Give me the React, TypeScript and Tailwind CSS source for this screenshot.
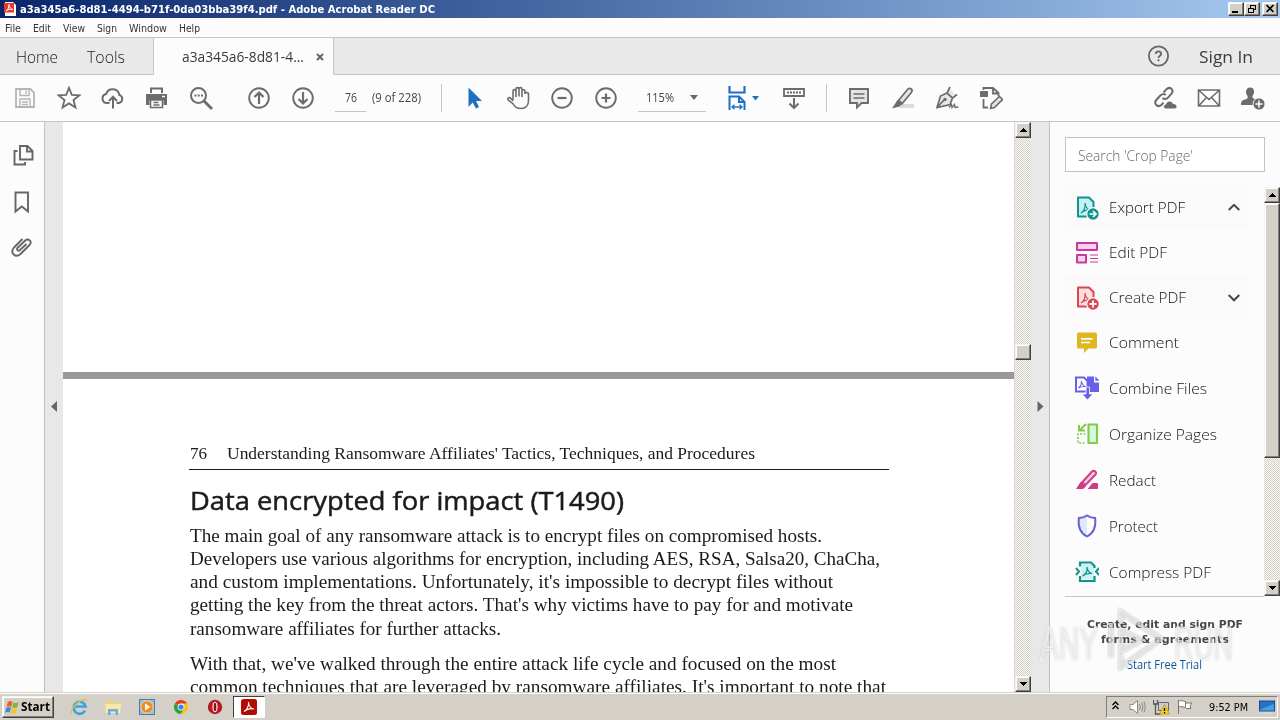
import { useLayoutEffect, useRef, useState } from 'react';
import type { ReactNode } from 'react';

/* Text stretched or squeezed horizontally to a known advance width. */
function Fit({ w, children, className = '' }: { w: number; children: ReactNode; className?: string }) {
  const ref = useRef<HTMLSpanElement>(null);
  const [scale, setScale] = useState(1);
  useLayoutEffect(() => {
    if (ref.current && ref.current.offsetWidth) setScale(w / ref.current.getBoundingClientRect().width);
  }, [w]);
  return (
    <span className={`block shrink-0 whitespace-nowrap ${className}`} style={{ width: w }}>
      <span ref={ref} className="inline-block origin-left" style={{ transform: `scaleX(${scale})` }}>
        {children}
      </span>
    </span>
  );
}

function Icon({ children, size = 24, className = '' }: { children: ReactNode; size?: number; className?: string }) {
  return (
    <svg width={size} height={size} viewBox="0 0 24 24" fill="none" stroke="currentColor" strokeWidth="2" className={`block shrink-0 ${className}`}>
      {children}
    </svg>
  );
}

function Cell({ children }: { children: ReactNode }) {
  return <div className="flex h-full w-11 shrink-0 items-center justify-center">{children}</div>;
}

const raised = 'border border-t-[#f4f3f0] border-l-[#f4f3f0] border-r-[#404040] border-b-[#404040] bg-[#d4d0c8] shadow-[inset_-1px_-1px_0_#808080,inset_1px_1px_0_#ffffff]';
const dither = 'bg-[repeating-conic-gradient(#d4d0c8_0%_25%,#fbfaf6_0%_50%)] bg-[length:2px_2px]';

function TitleButton({ kind }: { kind: 'min' | 'restore' | 'close' }) {
  return (
    <div className={`flex h-[14px] w-4 items-center justify-center ${raised}`}>
      <svg width="12" height="10" viewBox="0 0 12 10" fill="none" stroke="#000" className="shrink-0" shapeRendering="crispEdges">
        {kind === 'min' && <path d="M2 8h6" strokeWidth="2" />}
        {kind === 'restore' && <path d="M4.500 4V1.500h5v4H8M4 1.500h6M2.500 4.500h5v4h-5zM2 4.500h6" />}
        {kind === 'close' && <path d="M2.500 1l7 7M9.500 1l-7 7" strokeWidth="1.600" shapeRendering="auto" />}
      </svg>
    </div>
  );
}

function ScrollButton({ down = false }: { down?: boolean }) {
  return (
    <div className={`flex h-4 w-4 shrink-0 items-center justify-center ${raised}`}>
      <svg width="7" height="4" viewBox="0 0 7 4" fill="#000" shapeRendering="crispEdges">
        <path d={down ? 'M0 0h7L3.500 4z' : 'M0 4h7L3.500 0z'} />
      </svg>
    </div>
  );
}

function TitleBar() {
  return (
    <div className="flex h-[18px] shrink-0 items-center bg-linear-to-r from-[#0a246a] to-[#a6caf0] pr-0.5 pl-1">
      <svg width="12" height="14" viewBox="0 0 12 14" className="shrink-0">
        <path d="M1 0h8l3 3v11H1z" fill="#fff" />
        <path d="M0 1h10v9.500H0z" fill="#e8372f" />
        <path d="M2 9c2-1 3-4 3-6.500C5 5 7 7.500 9 7.500 6 6.500 4 7.500 2 9z" fill="none" stroke="#fff" />
      </svg>
      <Fit w={415} className="ml-1 pt-px text-[11px] leading-[18px] font-bold text-white">
        a3a345a6-8d81-4494-b71f-0da03bba39f4.pdf - Adobe Acrobat Reader DC
      </Fit>
      <div className="ml-auto flex">
        <TitleButton kind="min" />
        <TitleButton kind="restore" />
        <div className="w-0.5" />
        <TitleButton kind="close" />
      </div>
    </div>
  );
}

function MenuBar() {
  return (
    <div className="flex h-[19px] shrink-0 items-center gap-3 bg-[#fdfcfc] pt-px pl-[5px] font-['DejaVu_Sans_Condensed','DejaVu_Sans',sans-serif] text-[11px] leading-[19px] text-[#333]">
      <Fit w={16}>File</Fit>
      <Fit w={18}>Edit</Fit>
      <Fit w={22}>View</Fit>
      <Fit w={20}>Sign</Fit>
      <Fit w={38}>Window</Fit>
      <Fit w={21}>Help</Fit>
    </div>
  );
}

function TabBar() {
  return (
    <div className="flex h-[38px] shrink-0 border-t border-[#c6c6c6] bg-[#e9e9e9] text-[16px] font-light text-[#1c1c1c]">
      <div className="flex w-[153px] items-center border-b border-[#c6c6c6] pt-0.5 pl-4">
        <Fit w={42}>Home</Fit>
        <Fit w={38} className="ml-[29px]">Tools</Fit>
      </div>
      <div className="flex w-[181px] items-center border-x border-[#c6c6c6] bg-[#fcfcfc] pl-7 text-[15px] font-normal text-[#3a3a3a]">
        <Fit w={122}>a3a345a6-8d81-4...</Fit>
        <svg width="8" height="8" viewBox="0 0 8 8" className="ml-3" stroke="#666" strokeWidth="2">
          <path d="M1 1l6 6M7 1L1 7" />
        </svg>
      </div>
      <div className="flex flex-1 items-center border-b border-[#c6c6c6] pl-[812px] text-[#666]">
        <Icon>
          <circle cx="12.500" cy="12" r="9.600" strokeWidth="1.800" />
          <path d="M9.800 9.900c0-3.400 5.300-3.100 5.300 0 0 2-2.600 2-2.600 4M12.500 15.300v2" strokeWidth="1.800" />
        </Icon>
        <Fit w={54} className="ml-[29px] pt-px font-normal text-[#3c3c3c]">Sign In</Fit>
      </div>
    </div>
  );
}

function Toolbar() {
  return (
    <div className="flex h-[47px] shrink-0 items-center border-b border-[#c6c6c6] bg-[#fcfcfc] pl-[3px] text-[#6c6c6c]">
      <Cell>
        <Icon className="text-[#b4b4b4]">
          <path d="M3 3h14.500L21 6.500V21H3z" strokeWidth="1.800" />
          <path d="M7 3v6.500h9V3M7 21v-8h10v8M13 4.500V8M9 16h6M9 18.500h6" strokeWidth="1.400" />
        </Icon>
      </Cell>
      <Cell>
        <Icon><path d="M12 1.800l2.800 7.100 7.600.4-5.900 4.800 2 7.400-6.500-4.100-6.500 4.100 2-7.400L1.600 9.300l7.600-.4z" strokeWidth="1.800" /></Icon>
      </Cell>
      <Cell>
        <Icon>
          <path d="M8.500 17H6a4.600 4.600 0 0 1-.8-9.100 6.800 6.800 0 0 1 13.100 1A4.200 4.200 0 0 1 18 17h-2.500" />
          <path d="M12 22.500V11M8 15l4-4.200 4 4.200" />
        </Icon>
      </Cell>
      <Cell>
        <Icon>
          <path d="M5 1.500h13V7H5zM1 8h21v11h-3.500v-5h-14v5H1z" fill="currentColor" stroke="none" />
          <path d="M7 3.500h9V7H7z" fill="#fcfcfc" stroke="none" />
          <path d="M5.500 14h12v7.500h-12zM8.500 16.500h5M8.500 19h6" strokeWidth="1.600" />
          <path d="M17 10.500h3" stroke="#fcfcfc" strokeWidth="1.400" />
        </Icon>
      </Cell>
      <Cell>
        <Icon>
          <circle cx="9.500" cy="9.500" r="7.500" />
          <path d="M15 15l8 8" strokeWidth="2.800" />
          <path d="M5.500 9.500h2M8.700 9.500h2M12 9.500h2" strokeWidth="1.800" />
        </Icon>
      </Cell>
      <div className="w-3.5 shrink-0" />
      <Cell>
        <Icon><circle cx="12" cy="12" r="9.800" strokeWidth="1.900" /><path d="M12 18V7M7.500 11L12 6.500l4.500 4.500" strokeWidth="2.200" /></Icon>
      </Cell>
      <Cell>
        <Icon><circle cx="12" cy="12" r="9.800" strokeWidth="1.900" /><path d="M12 6v11M7.500 13l4.500 4.500 4.500-4.500" strokeWidth="2.200" /></Icon>
      </Cell>
      <div className="ml-[10px] flex h-[27px] w-[31px] shrink-0 items-center justify-center border-b border-[#c4c4c4] text-[12px] text-[#444]">
        <Fit w={12}>76</Fit>
      </div>
      <Fit w={49} className="ml-[6px] text-[12px] text-[#444]">(9 of 228)</Fit>
      <div className="ml-5 h-7 w-px shrink-0 bg-[#c6c6c6]" />
      <div className="w-[10px] shrink-0" />
      <Cell>
        <Icon className="text-[#1f70c1]"><path d="M6.500 1.500v19.500l4.200-4.500 3.300 6 3-1.500-3-6H20z" fill="currentColor" stroke="none" /></Icon>
      </Cell>
      <Cell>
        <Icon>
          <path d="M7 14V5.300c0-2.200 3-2.200 3 0V11M10 10.500V3.300c0-2.200 3-2.200 3 0V10.500M13 10.500V3.300c0-2.200 3-2.200 3 0V11M16 10.500V5.300c0-2 3-2 3 0" strokeWidth="1.600" />
          <path d="M19 5v3c0-2 3.500-2 3.500 0v6.500c0 5-3 8-7.500 8-4 0-6.300-1.500-7.800-4.500L2 13.800c-.8-2 1.800-3 3-1.300L7 15" strokeWidth="1.600" />
        </Icon>
      </Cell>
      <Cell>
        <Icon><circle cx="12" cy="12" r="9.800" strokeWidth="1.900" /><path d="M7.500 12h9" strokeWidth="2.200" /></Icon>
      </Cell>
      <Cell>
        <Icon><circle cx="12" cy="12" r="9.800" strokeWidth="1.900" /><path d="M7.500 12h9M12 7.500v9" strokeWidth="2.200" /></Icon>
      </Cell>
      <div className="ml-[10px] flex h-[27px] w-[68px] shrink-0 items-center border-b border-[#c4c4c4] pl-2 text-[12px] text-[#444]">
        <Fit w={28}>115%</Fit>
        <svg width="8" height="5" viewBox="0 0 8 5" className="ml-4" fill="#666"><path d="M0 0h8L4 5z" /></svg>
      </div>
      <div className="ml-[20px] flex shrink-0 items-center text-[#1f70c1]">
        <Icon>
          <path d="M3.500 0v6.500h15V0" strokeWidth="2.200" />
          <path d="M3.500 24V10.500H13l5.500 5.500v8M13 10.500V16h5.500" strokeWidth="2" />
          <path d="M6.500 21h9M8.500 18.800L6 21l2.500 2.200M13.500 18.800L16 21l-2.500 2.200" strokeWidth="1.300" />
        </Icon>
        <svg width="7" height="5" viewBox="0 0 7 5" className="ml-[2px]" fill="currentColor"><path d="M0 0h7L3.500 4.500z" /></svg>
      </div>
      <div className="w-[13px] shrink-0" />
      <Cell>
        <Icon>
          <path d="M2 3h20v7H2z" strokeWidth="1.800" />
          <path d="M5 6.500h14" strokeWidth="2" strokeDasharray="2 1" />
          <path d="M12 12v9.500M7.500 17.500L12 22l4.500-4.500" />
        </Icon>
      </Cell>
      <div className="ml-[10px] h-7 w-px shrink-0 bg-[#c6c6c6]" />
      <div className="w-[10px] shrink-0" />
      <Cell>
        <Icon><path d="M3 3h18v14h-6.500L10 21.500V17H3z" fill="#e4e4e4" strokeWidth="1.900" /><path d="M6.500 8h11M6.500 12h11" strokeWidth="1.500" /></Icon>
      </Cell>
      <Cell>
        <Icon>
          <path d="M11 18h12v4H8z" fill="#dcdcdc" stroke="none" />
          <path d="M7.500 14.500l9-11c1.200-1.500 2.500-1.500 3.700-.5s1.200 2.300 0 3.800l-9 10.700z" fill="#e4e4e4" strokeWidth="1.700" />
          <path d="M6.500 14l5 4-3 2.500L1 22.500z" fill="currentColor" stroke="none" />
        </Icon>
      </Cell>
      <Cell>
        <Icon>
          <path d="M14 2l6 6-3 2-1 7-14 4.500L6.500 9l6-2.500z" fill="#e6e6e6" stroke="none" />
          <path d="M2 21.500L5.500 10 12 7l5.500 5-2.500 6.500zM2 21.500L9 14M12 7l3-6M17.500 12L22 8.500" strokeWidth="1.700" />
          <circle cx="10" cy="13.500" r="1.700" fill="currentColor" stroke="none" />
          <path d="M14 21.500l2.500-3 .5 3 2.500-3 .5 3 3.500-.5" strokeWidth="1.300" />
        </Icon>
      </Cell>
      <Cell>
        <Icon>
          <path d="M1 5h8v6H1z" fill="currentColor" stroke="none" />
          <path d="M4.500 4V2H14l5.500 5v3.500M14 2v5.500h5M4.500 13v8.500H9" strokeWidth="1.800" />
          <path d="M11.500 22.500l1-4.500 8-7.500 3 3-8 8z" fill="#e4e4e4" strokeWidth="1.600" />
        </Icon>
      </Cell>
      <div className="ml-auto flex h-full pr-[5px]">
        <Cell>
          <Icon>
            <path d="M10.500 6.500l3-3.300c3.200-3.200 8 .8 5 4.500l-3.500 4c-1.600 1.800-4 1.800-5.500.3M12.800 9c-1.500-1.400-4-1-5.500.5l-4 4.500c-3 3.500 1.500 8 5 5l2.200-2.200" />
            <path d="M12.500 22.500c-2-.3-2-3.600.5-4 .8-3.500 5.500-4 7-.5 3.500-.5 5 4 2 4.500z" fill="currentColor" stroke="none" />
          </Icon>
        </Cell>
        <Cell>
          <Icon><path d="M1.500 4h21v16h-21zM2 4.500l10 9 10-9M2 19.500l7.500-8M22 19.500l-7.500-8" strokeWidth="1.600" /></Icon>
        </Cell>
        <Cell>
          <Icon>
            <path d="M9 1.500c3 0 4.300 2 4 4.800-.2 1.700-.8 2.700-1.500 3.700-.5 2 .5 2.500 3 3.300-2 1.200-3 3-2.500 5.700H0c0-4 1.500-5 5-5.700 1.500-.5 2-1.300 1.500-3.300C4 7 4.500 1.500 9 1.500z" fill="currentColor" stroke="none" />
            <circle cx="18" cy="18" r="6" fill="currentColor" stroke="#fcfcfc" strokeWidth=".8" />
            <path d="M18 14.500v7M14.500 18h7" stroke="#fcfcfc" strokeWidth="1.600" />
          </Icon>
        </Cell>
      </div>
    </div>
  );
}

function LeftRail() {
  return (
    <div className="flex w-[45px] shrink-0 flex-col border-r border-[#c0c0c0] bg-[#fcfcfc] pt-[21px] pl-[10px] text-[#666]">
      <Icon className="ml-[1px]">
        <path d="M9 3h7.500l5 5v8.500H9zM16 3.500v5h5M6.500 8H3.500v13.500H14V19" strokeWidth="1.900" />
      </Icon>
      <Icon className="mt-[23px]">
        <path d="M5.500 2.500h12.500V21.500l-6.200-5-6.300 5z" strokeWidth="1.900" />
      </Icon>
      <Icon className="mt-[22px]">
        <path d="M17 8.500l-6.500 6c-2 1.700-4-.5-2.300-2.300l7.300-7c3.500-3 7.500.8 4.500 4.300l-9 9c-5 4.500-11-1-6.500-6.500L13 3.500" strokeWidth="1.900" transform="translate(-.5 -.5)" />
      </Icon>
    </div>
  );
}

function Gutter({ right = false }: { right?: boolean }) {
  return (
    <div className="flex w-[18px] shrink-0 items-center justify-center bg-[#e8e8e8]">
      <svg width="7" height="12" viewBox="0 0 7 12" fill="#666">
        <path d={right ? 'M.5 0v11L6.500 5.500z' : 'M6 0v11L0 5.500z'} />
      </svg>
    </div>
  );
}

const paragraphs: [string, number][][] = [
  [
    ['The main goal of any ransomware attack is to encrypt files on compromised hosts.', 632],
    ['Developers use various algorithms for encryption, including AES, RSA, Salsa20, ChaCha,', 690],
    ["and custom implementations. Unfortunately, it's impossible to decrypt files without", 643],
    ["getting the key from the threat actors. That's why victims have to pay for and motivate", 663],
    ['ransomware affiliates for further attacks.', 311],
  ],
  [
    ["With that, we've walked through the entire attack life cycle and focused on the most", 646],
    ["common techniques that are leveraged by ransomware affiliates. It's important to note that", 696],
  ],
];

function Document() {
  return (
    <div className="flex min-w-0 flex-1 flex-col overflow-hidden bg-white text-[#1c1a1b]">
      <div className="h-[250px] shrink-0" />
      <div className="h-[7px] shrink-0 bg-[#999]" />
      <div className="flex shrink-0 flex-col pt-[62px] pl-[127px] font-['Liberation_Serif',serif]">
        <div className="flex h-6 text-[17.500px] leading-6">
          <Fit w={17}>76</Fit>
          <Fit w={528} className="ml-5">Understanding Ransomware Affiliates' Tactics, Techniques, and Procedures</Fit>
        </div>
        <div className="mt-[4px] -ml-px h-px w-[700px] bg-[#1c1a1b]" />
        <h1 className="mt-3 font-['Open_Sans','Noto_Sans',sans-serif] text-[26px] leading-9 font-normal [-webkit-text-stroke:0.5px_#1c1a1b]">
          <Fit w={434}>Data encrypted for impact (T1490)</Fit>
        </h1>
        {paragraphs.map((lines, i) => (
          <div key={i} className="mt-[6px] mb-[6px] text-[19px] leading-[23.150px]">
            {lines.map(([text, w]) => (
              <Fit key={text} w={w}>{text}</Fit>
            ))}
          </div>
        ))}
      </div>
    </div>
  );
}

function PdfPage({ color, fill }: { color: string; fill: string }) {
  return (
    <>
      <path d="M3 1.500h11l4.500 4.500v14.500H3z" fill={fill} stroke={color} strokeLinejoin="round" />
      <path d="M6 17c3-2 4.500-6 4-10 .5 5 3 6.500 6 7-5-.5-7.500.5-10 3z" stroke={color} strokeWidth="1.200" />
    </>
  );
}

const teal = '#12938b';
const tools: { name: string; w: number; chevron?: 'up' | 'down'; row: string; icon: ReactNode }[] = [
  {
    name: 'Export PDF', w: 76, chevron: 'up', row: 'h-[45px] bg-[#fafafa]',
    icon: (
      <>
        <PdfPage color={teal} fill="#c4f0f4" />
        <circle cx="18" cy="18" r="6.300" fill={teal} stroke="#fafafa" strokeWidth="1.200" />
        <path d="M14.500 18h6M18 15l3 3-3 3" stroke="#fff" strokeWidth="1.700" />
      </>
    ),
  },
  {
    name: 'Edit PDF', w: 58, row: 'h-[45px]',
    icon: (
      <g stroke="#cb3a9b">
        <path d="M2 2h20v7H2zM2 14h9v7.500H2z" fill="#fbd0ef" strokeWidth="2" strokeLinejoin="round" />
        <path d="M15 14H23M15 17.500H23M15 21H23" strokeWidth="1.200" />
      </g>
    ),
  },
  {
    name: 'Create PDF', w: 77, chevron: 'down', row: 'h-[45px] bg-[#fafafa]',
    icon: (
      <>
        <PdfPage color="#dc4653" fill="#fcdedf" />
        <circle cx="18" cy="18" r="6.300" fill="#dc4653" stroke="#fafafa" strokeWidth="1.200" />
        <path d="M14.500 18h7M18 14.500v7" stroke="#fff" strokeWidth="1.800" />
      </>
    ),
  },
  {
    name: 'Comment', w: 70, row: 'h-[45px]',
    icon: (
      <>
        <path d="M3.500 1.500h17q1.500 0 1.500 1.500v13q0 1.500-1.500 1.500h-7L9 22v-4.500H3.500q-1.500 0-1.500-1.500V3q0-1.500 1.500-1.500z" fill="#dfb821" stroke="none" />
        <path d="M6 7.800h11.500M6 11.500h9" stroke="#fff" strokeWidth="1.700" />
      </>
    ),
  },
  {
    name: 'Combine Files', w: 98, row: 'h-[46px]',
    icon: (
      <>
        <path d="M12 .5h7v6h5.500V16H12z" fill="#6a5fe8" stroke="none" />
        <path d="M20.300.3l4 4.400h-4z" fill="#6a5fe8" stroke="none" />
        <path d="M1 1.500h8l3.500 3.500v10.500H1z" fill="#fff" stroke="#6a5fe8" strokeWidth="2" />
        <path d="M3.500 12c2-1.500 3-4 3-7 .5 4 2 5 4 5.500-3 0-5 0-7 1.500z" stroke="#6a5fe8" strokeWidth="1.100" />
        <path d="M11 11h3.500v7H18l-5.500 6L7 18h4z" fill="#6a5fe8" stroke="#fcfcfc" strokeWidth=".8" />
      </>
    ),
  },
  {
    name: 'Organize Pages', w: 108, row: 'h-[46px]',
    icon: (
      <g stroke="#82cc4c">
        <path d="M13.500 2.500H22V21h-8.500z" fill="#d9f7e0" strokeWidth="2.200" strokeLinejoin="round" />
        <path d="M10.500 12H3v9h8" strokeWidth="1.700" strokeDasharray="2 1.500" />
        <path d="M11 2L5 8M4 3v5.500h6" strokeWidth="2" />
      </g>
    ),
  },
  {
    name: 'Redact', w: 47, row: 'h-[46px]',
    icon: (
      <>
        <path d="M7 14.500L17 3.500c1-1 2-1 3.200 0s1.200 2 .3 3L10.500 17z" fill="#f9c8e4" stroke="#cf3a86" strokeWidth="1.900" />
        <path d="M5.500 14l5.500 4.500-3 2.500H1zM13 20.500l4.500-5.500H22q1 0 1 1v4.500q0 .5-1 .5H13z" fill="#cf3a86" stroke="none" />
      </>
    ),
  },
  {
    name: 'Protect', w: 49, row: 'h-[46px]',
    icon: (
      <>
        <path d="M12 1.500c2.500 1.700 5 2.500 8.200 2.500 1 9-1.200 15-8.200 18.500C5 19 2.800 13 3.800 4 7 4 9.500 3.200 12 1.500z" fill="#dfe8fb" stroke="#6b5ed3" strokeWidth="1.900" />
        <path d="M12 3v18c5-3 7.200-8 7-16-2.800 0-5-.8-7-2z" fill="#fff" stroke="none" />
      </>
    ),
  },
  {
    name: 'Compress PDF', w: 102, row: 'h-[46px]',
    icon: (
      <g stroke={teal}>
        <path d="M6 4h10l3 3v12H6z" fill="#cdf2f5" stroke="none" />
        <path d="M5 6.500v-4h11l3.500 3.500v2M5 16v5h14.500v-5" strokeWidth="2.200" />
        <path d="M7.500 16c3.500-2 5-5.500 4.500-9 .5 4.500 2.500 6 5 6.500-4-.5-7 .5-9.500 2.500z" strokeWidth="1.200" />
        <path d="M1 8l3 3.500L1 15M24 8l-3 3.500 3 3.500" strokeWidth="2" />
      </g>
    ),
  },
];

function ToolPanel() {
  return (
    <div className="flex w-[231px] shrink-0 flex-col border-l border-[#c0c0c0] bg-[#fcfcfc]">
      <div className="mt-[15px] ml-[15px] flex h-[35px] w-[200px] shrink-0 items-center border border-[#c2c2c2] bg-white pt-px pl-3 text-[14px] font-light text-[#666]">
        <Fit w={115}>Search 'Crop Page'</Fit>
      </div>
      <div className="mt-[13px] ml-[15px] flex h-[412px] shrink-0">
        <div className="w-[199px] border-b border-[#c6c6c6]">
          {tools.map((t) => (
            <div key={t.name} className={`flex w-[183px] items-center pl-[10px] ${t.row}`}>
              <Icon>{t.icon}</Icon>
              <Fit w={t.w} className="ml-[10px] text-[15px] font-light text-[#111]">{t.name}</Fit>
              {t.chevron && (
                <svg width="12" height="8" viewBox="0 0 12 8" className="mr-2 ml-auto" fill="none" stroke="#484848" strokeWidth="2">
                  <path d={t.chevron === 'up' ? 'M.7 6L6 .900 11.300 6' : 'M.7 1L6 6.300 11.300 1'} />
                </svg>
              )}
            </div>
          ))}
        </div>
        <div className={`mt-[2px] mb-px flex w-4 flex-col ${dither}`}>
          <ScrollButton />
          <div className={`h-[255px] ${raised}`} />
          <div className="flex-1" />
          <ScrollButton down />
        </div>
      </div>
      <div className="flex flex-col items-center pt-5 pr-px font-['DejaVu_Sans',sans-serif] text-[11px] leading-[15px] font-bold text-[#484848]">
        <Fit w={156} className="h-[15px]">Create, edit and sign PDF</Fit>
        <Fit w={128} className="h-[15px]">forms &amp; agreements</Fit>
        <Fit w={75} className="mt-[10px] font-['Open_Sans',sans-serif] text-[12px] leading-4 font-normal text-[#13539a]">Start Free Trial</Fit>
      </div>
    </div>
  );
}

function Watermark() {
  return (
    <div className="pointer-events-none absolute top-[606px] left-[1040px] flex h-[68px] w-[193px] items-center justify-between font-['Liberation_Sans',sans-serif] text-[49px] leading-none text-white/60 [text-shadow:0_0_3px_rgba(0,0,0,0.28)] [-webkit-text-stroke:1.5px_rgba(255,255,255,0.5)]">
      <Fit w={58} className="pt-1.5">ANY</Fit>
      <svg width="58" height="66" viewBox="0 0 58 66" fill="none" stroke="#fff" strokeOpacity=".6" strokeWidth="4.500" className="drop-shadow-[0_0_1px_rgba(0,0,0,0.5)]">
        <path d="M14 17V5l40 27-40 28V48M4 16v34M14 23l20 10-20 11z" />
      </svg>
      <Fit w={59} className="pt-1.5">RUN</Fit>
    </div>
  );
}

function Taskbar() {
  return (
    <div className="flex h-7 shrink-0 items-center border-t border-[#d4d0c8] bg-[#d4d0c8] pt-px pr-[2px] pl-[2px] shadow-[inset_0_1px_0_#fff]">
      <div className={`flex h-[22px] w-[52px] shrink-0 items-center pl-[2px] ${raised}`}>
        <svg width="15" height="15" viewBox="0 0 16 16" className="shrink-0">
          <path d="M3 2c2-1.200 3.500-1 5 0L6.700 7.300c-1.500-1-3-1-5 0z" fill="#e8612c" />
          <path d="M8.800 2.400c2 1.200 3.500 1 5.800 0l-1.400 5.300c-2 1-3.700 1-5.600 0z" fill="#80bb3b" />
          <path d="M1.400 8.200c2-1 3.500-1 5 0L5 13.500c-1.500-1-3-1-5 0z" fill="#3f8bd8" />
          <path d="M7.300 8.600c2 1.200 3.500 1 5.800 0L11.700 14c-2 1-3.700 1-5.600 0z" fill="#f7c331" />
        </svg>
        <Fit w={29} className="ml-[1px] text-[12px] leading-5 font-bold text-black">Start</Fit>
      </div>
      <svg width="18" height="18" viewBox="0 0 18 18" className="ml-4 shrink-0" fill="none">
        <path d="M15 12.500a6 6 0 1 1 .5-4H5" stroke="#36a5e4" strokeWidth="2.700" />
        <path d="M1.500 16.500C-1 11 12-1 17 2" stroke="#e9bd45" strokeWidth="1.500" />
      </svg>
      <svg width="18" height="18" viewBox="0 0 18 18" className="ml-4 shrink-0">
        <path d="M2 3h5l1 1.500h8V15H2z" fill="#eed078" />
        <path d="M1 6h16l-1 9H2z" fill="#f9e7a6" />
        <path d="M4 17v-6h10v6h-2.500v-3.500h-5V17z" fill="#6bb0dd" />
      </svg>
      <svg width="16" height="16" viewBox="0 0 16 16" className="ml-[17px] shrink-0">
        <rect x=".5" y=".5" width="15" height="15" fill="#8cc2e8" stroke="#3f7fb7" />
        <circle cx="8" cy="8" r="6.200" fill="#f28a1e" stroke="#f8d8a8" />
        <path d="M6 4.500v7L11.500 8z" fill="#fff" />
      </svg>
      <svg width="16" height="16" viewBox="0 0 16 16" className="ml-[18px] shrink-0">
        <circle cx="8" cy="8" r="7" fill="#fbc116" />
        <path d="M8 8L1.900 4.500A7 7 0 0 1 14.100 4.500H8z" fill="#e33b2e" />
        <path d="M8 8L1.900 4.500A7 7 0 0 0 7.500 15L11 9.800z" fill="#2ba24c" />
        <circle cx="8" cy="8" r="3.400" fill="#fff" />
        <circle cx="8" cy="8" r="2.600" fill="#3f7fe8" />
      </svg>
      <svg width="16" height="16" viewBox="0 0 16 16" className="ml-[18px] shrink-0">
        <circle cx="8" cy="8" r="7.200" fill="#b91821" />
        <ellipse cx="8" cy="8" rx="2.600" ry="5.300" fill="#fff" />
        <ellipse cx="8" cy="8" rx="1.400" ry="4.300" fill="#8a1016" />
      </svg>
      <div className="ml-[10px] flex h-[22px] w-8 shrink-0 items-center justify-center border border-t-[#404040] border-r-white border-b-white border-l-[#404040] bg-white">
        <svg width="16" height="16" viewBox="0 0 16 16">
          <rect width="16" height="16" rx="2.500" fill="#b30b00" />
          <path d="M3 12.500c3-1.500 5-6 4.500-9.500 0 4 2.500 7 5.500 7-3.500-.8-7-.2-10 2.500z" fill="none" stroke="#fff" strokeWidth="1.100" />
        </svg>
      </div>
      <div className="ml-auto flex h-[22px] w-[172px] shrink-0 items-center border border-t-[#808080] border-r-white border-b-white border-l-[#808080]">
        <svg width="7" height="9" viewBox="0 0 7 9" className="ml-[5px] mb-[3px]" fill="none" stroke="#000" strokeWidth="1.400">
          <path d="M.5 4l3-3 3 3M.5 8l3-3 3 3" />
        </svg>
        <svg width="17" height="16" viewBox="0 0 17 16" className="ml-[10px]" fill="none" stroke="#8a8a8a">
          <path d="M1 5.500h3L8.500 1.500v13L4 10.500H1z" fill="#fff" />
          <path d="M10.500 5q1.500 3 0 6M12.700 3.500q2.500 4.500 0 9M15 2.500q2.500 5.500 0 11" />
        </svg>
        <svg width="17" height="16" viewBox="0 0 17 16" className="ml-[7px]">
          <path d="M5.500 3.500h10v8h-10z" fill="#c9ccd2" stroke="#666" />
          <path d="M.5 1v4h4V1M2.500 5v10h5" fill="none" stroke="#555" strokeWidth="1.300" />
          <path d="M11.500 5.500l5 9.500h-10z" fill="#f8cf25" stroke="#b48c00" strokeWidth=".6" />
          <path d="M11.500 9v3M11.500 13v1.200" stroke="#000" strokeWidth="1.300" />
        </svg>
        <svg width="17" height="16" viewBox="0 0 17 16" className="ml-[7px]" fill="#fff" stroke="#777">
          <path d="M1.500 1v14M1.500 2c3-1 4 0 7 .5v6c-3-.5-4-1.500-7-.5zM8.500 4h6.500l-2 3 1 2.500H9" />
        </svg>
        <Fit w={39} className="ml-[15px] pt-px font-['DejaVu_Sans_Condensed','DejaVu_Sans',sans-serif] text-[11px] leading-5 text-black">9:52 PM</Fit>
        <svg width="16" height="14" viewBox="0 0 16 14" className="ml-[11px]">
          <rect x=".5" y="1" width="15" height="10" fill="#2471c8" stroke="#1c4d86" />
          <path d="M1 9.500L15 4v6.500H1z" fill="#3fa0e8" />
          <path d="M4 13h8" stroke="#ddd" strokeWidth="1.500" />
        </svg>
      </div>
    </div>
  );
}

export default function App() {
  return (
    <div className="relative flex h-[720px] w-[1280px] flex-col overflow-hidden bg-white font-['Open_Sans','Noto_Sans',sans-serif]">
      <div className="contents font-['DejaVu_Sans_Condensed','DejaVu_Sans',sans-serif]">
        <TitleBar />
      </div>
      <MenuBar />
      <TabBar />
      <Toolbar />
      <div className="flex min-h-0 flex-1">
        <LeftRail />
        <Gutter />
        <Document />
        <div className={`flex w-[17px] shrink-0 flex-col border-l border-[#d8d6d0] ${dither}`}>
          <ScrollButton />
          <div className="h-[206px]" />
          <div className={`h-4 w-4 ${raised}`} />
          <div className="flex-1" />
          <ScrollButton down />
        </div>
        <Gutter right />
        <ToolPanel />
      </div>
      <Taskbar />
      <Watermark />
    </div>
  );
}
